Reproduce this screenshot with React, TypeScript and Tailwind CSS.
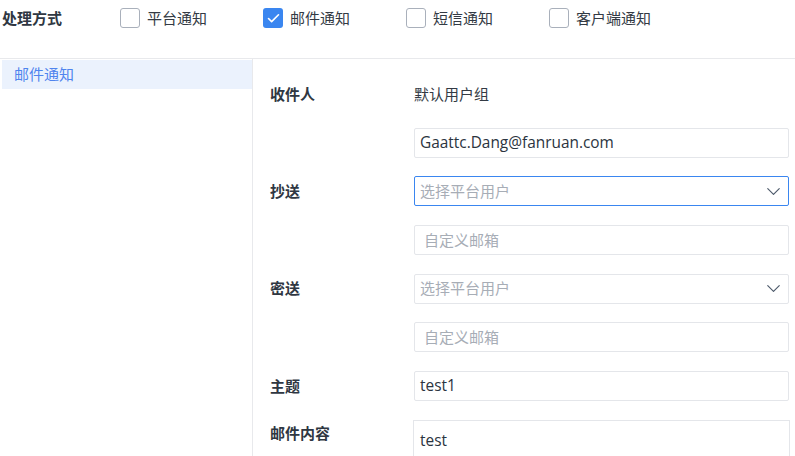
import { ChevronDown, Check } from 'lucide-react';

const FONT = "font-['Open_Sans','Noto_Sans_CJK_SC',sans-serif]";

const channels = [
  { label: '平台通知', checked: false },
  { label: '邮件通知', checked: true },
  { label: '短信通知', checked: false },
  { label: '客户端通知', checked: false },
];

function CheckItem({ label, checked }: { label: string; checked: boolean }) {
  return (
    <label className="flex items-center gap-[7px] w-[143px]">
      {checked ? (
        <span className="w-[20px] h-[20px] rounded-[3px] bg-[#3a86f0] flex items-center justify-center">
          <Check size={15} strokeWidth={2.6} className="text-white" />
        </span>
      ) : (
        <span className="w-[20px] h-[20px] rounded-[3px] border border-[#a9b0bb] bg-white" />
      )}
      <span className="text-[15px] text-[#333a44]">{label}</span>
    </label>
  );
}

function Field({ value, placeholder, pad = 'px-[5px]' }: { value?: string; placeholder?: string; pad?: string }) {
  return (
    <div className={`h-[30px] w-[375px] border border-[#e4e6ea] rounded-[2px] flex items-center ${pad}`}>
      {value ? (
        <span className="text-[15.4px] text-[#2b3440]">{value}</span>
      ) : (
        <span className="text-[15px] text-[#a7adb6]">{placeholder}</span>
      )}
    </div>
  );
}

function Select({ active }: { active?: boolean }) {
  return (
    <div
      className={`h-[30px] w-[375px] border rounded-[2px] flex items-center justify-between pl-[5px] pr-[3px] text-[15px] ${
        active ? 'border-[#3a86f0]' : 'border-[#e4e6ea]'
      }`}
    >
      <span className="text-[#a7adb6]">选择平台用户</span>
      <ChevronDown size={23} strokeWidth={1.2} className="text-[#4d5a6b]" />
    </div>
  );
}

function Row({ label, children }: { label?: string; children: React.ReactNode }) {
  return (
    <div className="flex items-center h-[30px] shrink-0">
      <div className="w-[161px] pl-[17px] text-[15px] font-bold text-[#2f3742]">{label}</div>
      {children}
    </div>
  );
}

export default function App() {
  return (
    <div className={`w-[795px] h-[456px] overflow-hidden bg-white ${FONT}`}>
      <div className="flex items-center h-[36px]">
        <div className="w-[120px] pl-[2px] text-[15px] font-bold text-[#2f3742]">处理方式</div>
        {channels.map((c) => (
          <CheckItem key={c.label} {...c} />
        ))}
      </div>
      <div className="h-[22px]" />
      <div className="flex border-t border-[#e8e9ec]">
        <div className="w-[252px] pl-[2px] pt-[1px]">
          <div className="h-[29px] bg-[#ebf2fd] flex items-center pl-[12px] text-[15px] text-[#4f84ee]">邮件通知</div>
        </div>
        <div className="flex-1 border-l border-[#e8e9ec] pt-[20px] pb-[20px] flex flex-col gap-[18.67px]">
          <Row label="收件人">
            <span className="text-[15px] text-[#333a44]">默认用户组</span>
          </Row>
          <Row>
            <Field value="Gaattc.Dang@fanruan.com" />
          </Row>
          <Row label="抄送">
            <Select active />
          </Row>
          <Row>
            <Field placeholder="自定义邮箱" pad="px-[9px]" />
          </Row>
          <Row label="密送">
            <Select />
          </Row>
          <Row>
            <Field placeholder="自定义邮箱" pad="px-[9px]" />
          </Row>
          <Row label="主题">
            <Field value="test1" />
          </Row>
          <div className="flex items-start shrink-0">
            <div className="w-[161px] pl-[17px] pt-[2px] text-[15px] font-bold text-[#2f3742]">邮件内容</div>
            <div className="w-[377px] -ml-[1px] h-[60px] border border-[#e4e6ea] px-[6px] pt-[8px] text-[15.4px] text-[#2b3440]">
              test
            </div>
          </div>
        </div>
      </div>
    </div>
  );
}
